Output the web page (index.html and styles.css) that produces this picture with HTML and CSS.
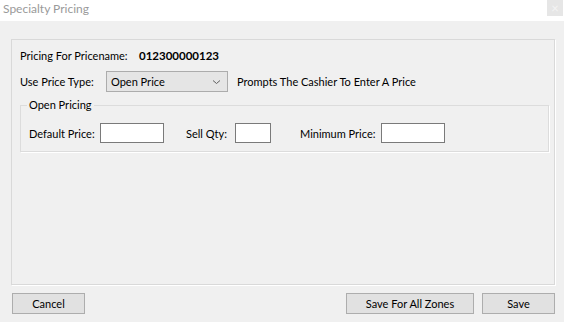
FILE: index.html
```html
<!DOCTYPE html>
<html lang="en">
<head>
    <meta charset="UTF-8">
    <title>Specialty Pricing</title>
    <link rel="stylesheet" href="styles.css">
</head>
<body>
    <div class="title-bar">
        <span class="title-text">Specialty Pricing</span>
        <span class="close-btn">&#215;</span>
    </div>
    <div class="window-body">
        <div class="panel">
            <div class="row row-name">
                <span class="lbl lbl-name">Pricing For Pricename:</span>
                <span class="value">012300000123</span>
            </div>
            <div class="row row-type">
                <span class="lbl lbl-type">Use Price Type:</span>
                <div class="combo">
                    <span>Open Price</span>
                    <svg class="chev" width="9" height="6" viewBox="0 0 9 6"><path d="M1 1.5 L4.5 4.5 L8 1.5" fill="none" stroke="#606060" stroke-width="1"/></svg>
                </div>
                <span class="hint">Prompts The Cashier To Enter A Price</span>
            </div>
            <fieldset class="group">
                <legend>Open Pricing</legend>
                <div class="row group-row">
                    <span class="lbl lbl-default">Default Price:</span>
                    <div class="box box-wide"></div>
                    <span class="lbl lbl-qty">Sell Qty:</span>
                    <div class="box box-small"></div>
                    <span class="lbl lbl-min">Minimum Price:</span>
                    <div class="box box-wide"></div>
                </div>
            </fieldset>
        </div>
        <div class="footer">
            <button class="btn">Cancel</button>
            <div class="footer-right">
                <button class="btn btn-wide">Save For All Zones</button>
                <button class="btn">Save</button>
            </div>
        </div>
    </div>
</body>
</html>
```

FILE: styles.css
```css
body{/*ventana*/
    margin: 0;
    padding: 0;
    width: 564px;
    height: 322px;
    overflow: hidden;
    background-color: #f0f0f0;
    font-family: Lato, "Liberation Sans", sans-serif;
    font-size: 11px;
    color: #000000;
}
.title-bar{/*barra de titulo*/
    height: 21px;
    background-color: #ffffff;
    display: flex;
    justify-content: space-between;
    align-items: flex-start;
}
.title-text{
    color: #9a9a9a;
    font-size: 12px;
    padding-left: 3px;
    line-height: 18px;
}
.close-btn{
    width: 16px;
    height: 16px;
    margin-right: 1px;
    background-color: #e6e6e6;
    color: #f4f4f4;
    font-size: 13px;
    line-height: 16px;
    text-align: center;
}
.window-body{
    padding: 18px 9px 0 11px;
}
.panel{/*panel principal*/
    box-sizing: border-box;
    height: 246px;
    border: 1px solid #d9d9d9;
    box-shadow: 1px 1px 0 #ffffff;
    padding: 8px 5px 0 8px;
}
.row{
    display: flex;
    align-items: center;
}
.row-name{
    height: 14px;
}
.lbl{
    white-space: nowrap;
    flex-shrink: 0;
}
.lbl-name{
    width: 119px;
}
.value{
    font-weight: bold;
    font-size: 11.5px;
}
.row-type{
    margin-top: 9px;
    height: 21px;
}
.lbl-type{
    width: 86px;
}
.combo{/*lista desplegable*/
    box-sizing: border-box;
    flex-shrink: 0;
    width: 122px;
    height: 21px;
    background-color: #e5e5e5;
    border: 1px solid #acacac;
    display: flex;
    align-items: center;
    justify-content: space-between;
    padding: 0 6px 0 4px;
}
.hint{
    margin-left: 9px;
    white-space: nowrap;
}
.group{/*grupo open pricing*/
    margin: 6px 0 0 0;
    border: 1px solid #dcdcdc;
    box-shadow: 1px 1px 0 #ffffff;
    padding: 11px 8px 8px 8px;
}
.group legend{
    padding: 0 2px;
    margin-left: -2px;
    line-height: 14px;
}
.group-row{
    height: 20px;
}
.lbl-default{
    width: 71px;
}
.lbl-qty{
    margin-left: 22px;
    width: 49px;
}
.lbl-min{
    margin-left: 29px;
    width: 81px;
}
.box{/*cajas de texto*/
    box-sizing: border-box;
    flex-shrink: 0;
    height: 20px;
    background-color: #ffffff;
    border: 1px solid #7a7a7a;
}
.box-wide{
    width: 64px;
}
.box-small{
    width: 36px;
}
.footer{/*botones*/
    display: flex;
    justify-content: space-between;
    margin-top: 8px;
    padding-left: 1px;
}
.footer-right{
    display: flex;
    gap: 8px;
}
.btn{
    box-sizing: border-box;
    width: 73px;
    height: 21px;
    background-color: #e1e1e1;
    border: 1px solid #adadad;
    border-radius: 0;
    font-family: Lato, "Liberation Sans", sans-serif;
    font-size: 11px;
    color: #000000;
    padding: 0;
}
.btn-wide{
    width: 128px;
}
```
